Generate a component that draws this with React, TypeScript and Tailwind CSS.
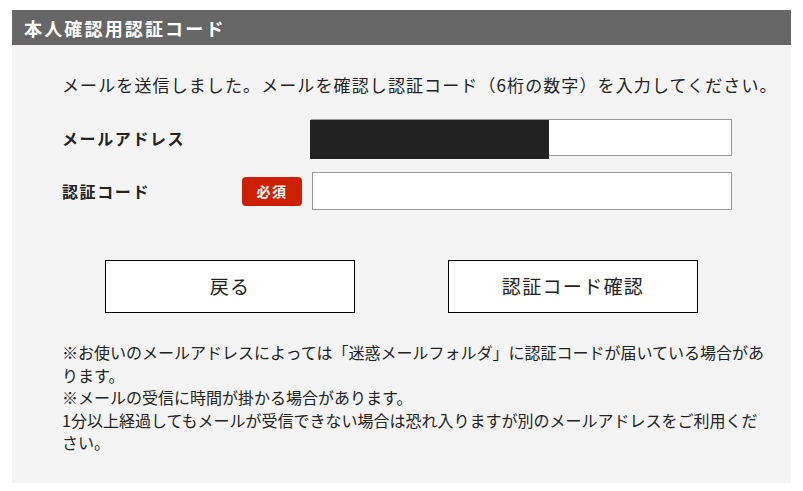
import React from 'react';

export default function App() {
    return (
        <div className="min-h-[491px] bg-white pt-[10px] px-[12px] font-['Noto_Sans_CJK_JP',sans-serif] text-[#222]">
            <div className="w-[779px]">
                <div className="h-[35px] bg-[#666666] pl-[12px] flex items-center">
                    <h2 className="text-[18px] font-bold text-white tracking-[0.12em] leading-none">本人確認用認証コード</h2>
                </div>
                <div className="bg-[#f4f4f4] pl-[50px] pt-[28px] pb-[29px]">
                    <p className="text-[17px] leading-[24px] tracking-[0.065em] whitespace-nowrap">
                        メールを送信しました。メールを確認し認証コード（6桁の数字）を入力してください。
                    </p>

                    <div className="mt-[22px] flex items-center">
                        <div className="w-[249px] text-[16px] font-bold tracking-[0.1em]">メールアドレス</div>
                        <div className="relative">
                            <input type="text" className="block w-[421px] h-[37px] bg-white border border-[#999]" />
                            <div className="absolute left-[-1px] top-[1px] w-[239px] h-[39px] bg-[#222]" />
                        </div>
                    </div>

                    <div className="mt-[16px] flex items-center">
                        <div className="w-[180px] text-[16px] font-bold tracking-[0.1em]">認証コード</div>
                        <span className="w-[60px] h-[29px] rounded-[4px] bg-[#cc2000] text-white text-[14px] font-bold tracking-[0.1em] flex items-center justify-center">必須</span>
                        <input type="text" className="ml-[10px] block w-[420px] h-[38px] bg-white border border-[#999]" />
                    </div>

                    <div className="mt-[50px] flex gap-[93px] pl-[43px]">
                        <button className="w-[250px] h-[53px] bg-white border border-black text-[19px] tracking-[0.07em]">戻る</button>
                        <button className="w-[250px] h-[53px] bg-white border border-black text-[19px] tracking-[0.07em]">認証コード確認</button>
                    </div>

                    <div className="mt-[28px] w-[708px] text-[16px] leading-[22.5px]">
                        <p>※お使いのメールアドレスによっては「迷惑メールフォルダ」に認証コードが届いている場合があります。</p>
                        <p>※メールの受信に時間が掛かる場合があります。</p>
                        <p>1分以上経過してもメールが受信できない場合は恐れ入りますが別のメールアドレスをご利用ください。</p>
                    </div>
                </div>
            </div>
        </div>
    );
}
